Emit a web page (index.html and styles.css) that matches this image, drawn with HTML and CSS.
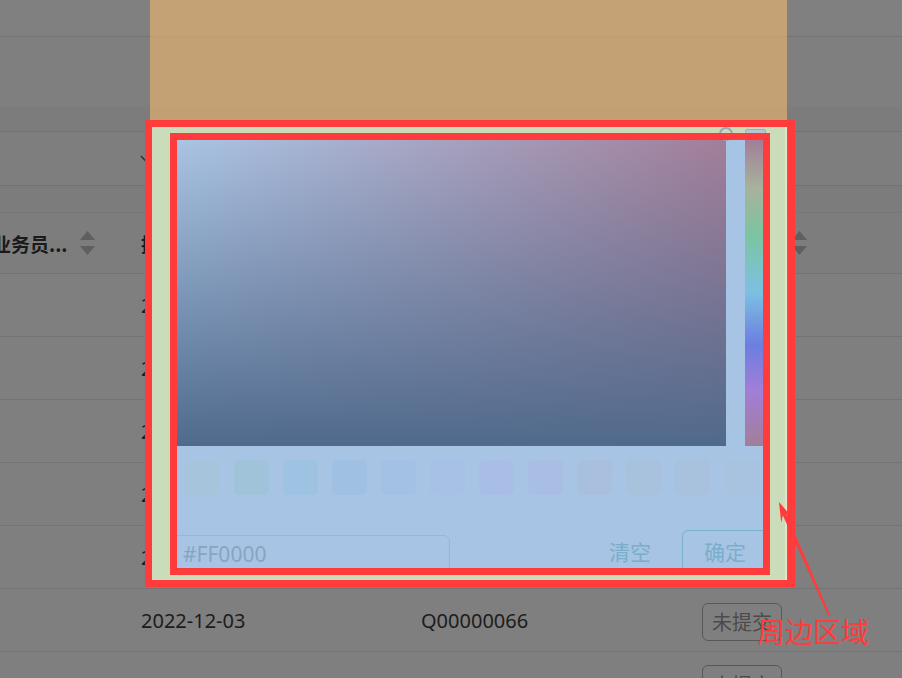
FILE: index.html
```html
<!DOCTYPE html>
<html lang="zh-CN">
<head>
<meta charset="utf-8">
<title>颜色选择器</title>
<link rel="stylesheet" href="styles.css">
</head>
<body>
<div class="page">
  <div class="band band-top"></div>
  <div class="band band-mid"></div>
  <div class="band band-sub"></div>
  <div class="filter-row">
    <svg class="chev" width="14" height="9" viewBox="0 0 14 9"><path d="M1 1 L7 7.5 L13 1" fill="none" stroke="#2e2e2e" stroke-width="1.4"/></svg>
  </div>
  <div class="band band-gap"></div>

  <div class="grid-row head">
    <div class="cell c1"><span class="ht ht-cut">业务员...</span>
      <svg class="sort" width="15" height="24" viewBox="0 0 15 24"><path d="M7.5 0 L15 9 L0 9 Z M0 15 L15 15 L7.5 24 Z" fill="#5f5f5f"/></svg>
    </div>
    <div class="cell"><span class="ht">提交日期</span></div>
    <div class="cell"><span class="ht">报价单号</span></div>
    <div class="cell c4"><span class="ht">状态</span>
      <svg class="sort sort-end" width="15" height="24" viewBox="0 0 15 24"><path d="M7.5 0 L15 9 L0 9 Z M0 15 L15 15 L7.5 24 Z" fill="#5f5f5f"/></svg>
    </div>
    <div class="cell"></div>
  </div>

  <div class="grid-row"><div class="cell"></div><div class="cell">2022-12-05</div><div class="cell">Q00000071</div><div class="cell"><span class="tag">未提交</span></div><div class="cell"></div></div>
  <div class="grid-row"><div class="cell"></div><div class="cell">2022-12-05</div><div class="cell">Q00000070</div><div class="cell"><span class="tag">未提交</span></div><div class="cell"></div></div>
  <div class="grid-row"><div class="cell"></div><div class="cell">2022-12-04</div><div class="cell">Q00000069</div><div class="cell"><span class="tag">未提交</span></div><div class="cell"></div></div>
  <div class="grid-row"><div class="cell"></div><div class="cell">2022-12-04</div><div class="cell">Q00000068</div><div class="cell"><span class="tag">未提交</span></div><div class="cell"></div></div>
  <div class="grid-row"><div class="cell"></div><div class="cell">2022-12-03</div><div class="cell">Q00000067</div><div class="cell"><span class="tag">未提交</span></div><div class="cell"></div></div>
  <div class="grid-row"><div class="cell"></div><div class="cell">2022-12-03</div><div class="cell">Q00000066</div><div class="cell"><span class="tag">未提交</span></div><div class="cell"></div></div>
  <div class="grid-row last"><div class="cell"></div><div class="cell"></div><div class="cell"></div><div class="cell cell-top"><span class="tag">未提交</span></div><div class="cell"></div></div>
</div>

<!-- inspector highlight over the color picker -->
<div class="hl-margin"></div>
<div class="hl-padding"></div>
<div class="picker">
  <div class="picker-top">
    <div class="sv-panel"></div>
    <div class="hue-bar"></div>
  </div>
  <div class="swatches">
    <span class="sw sw1"></span><span class="sw sw2"></span><span class="sw sw3"></span><span class="sw sw4"></span>
    <span class="sw sw5"></span><span class="sw sw6"></span><span class="sw sw7"></span><span class="sw sw8"></span>
    <span class="sw sw9"></span><span class="sw sw10"></span><span class="sw sw11"></span><span class="sw sw12"></span>
  </div>
  <div class="picker-foot">
    <div class="hex-input">#FF0000</div>
    <span class="btn-text">清空</span>
    <span class="btn-ok">确定</span>
  </div>
</div>
<div class="sv-cursor"></div>
<div class="hue-thumb"></div>

<!-- annotation -->
<div class="mark mark-outer"></div>
<div class="mark mark-inner"></div>
<svg class="arrow" width="902" height="678" viewBox="0 0 902 678">
  <polygon points="779,502 792.6,517.9 786.5,514 830.1,614.9 828.3,615.7 782.9,515.6 781.2,522.7" fill="#ff3b3b"/>
</svg>
<div class="note">周边区域</div>
</body>
</html>
```
FILE: styles.css
```css
* { box-sizing: border-box; }

body {
  margin: 0;
  width: 902px;
  height: 678px;
  overflow: hidden;
  position: relative;
  background: #7f7f7f;
  font-family: "Noto Sans", "Noto Sans CJK SC", sans-serif;
  color: #1c1c1c;
}

/* ---------- background table (under modal mask) ---------- */
.page {
  display: flex;
  flex-direction: column;
  height: 678px;
  overflow: hidden;
}

.band { flex: none; }
.band-top { height: 37px; background: #808080; border-bottom: 1px solid #747474; }
.band-mid { height: 70px; background: #7f7f7f; }
.band-sub { height: 25px; background: #7c7c7c; border-bottom: 1px solid #727272; }
.filter-row {
  flex: none;
  height: 54px;
  background: #7e7e7e;
  border-bottom: 1px solid #727272;
  display: flex;
  align-items: center;
  padding-left: 140px;
}
.chev { display: block; margin-top: 2px; }
.band-gap { height: 27px; background: #7c7c7c; border-bottom: 1px solid #777777; }

.grid-row {
  flex: none;
  display: grid;
  grid-template-columns: 141px 280px 281px 105px 1fr;
  height: 63px;
  border-bottom: 1px solid #747474;
  background: #7f7f7f;
  font-size: 20px;
}
.grid-row.head { height: 61px; background: #7d7d7d; }
.grid-row.last { height: 27px; border-bottom: 0; }

.cell {
  display: flex;
  align-items: center;
  overflow: hidden;
  white-space: nowrap;
}
.cell-top { align-items: flex-start; padding-top: 13px; }
.ht {
  font-weight: 700;
  font-size: 19px;
  color: #1a1a1a;
  font-family: "Noto Sans CJK SC", sans-serif;
}
.ht-cut { margin-left: -8px; }
.sort { display: block; margin-left: 12px; flex: none; }
.sort-end { margin-left: auto; }

.tag {
  display: inline-flex;
  align-items: center;
  height: 38px;
  padding: 0 9px;
  border: 1px solid #585858;
  border-radius: 6px;
  color: #4b4b4b;
  font-size: 20px;
  font-family: "Noto Sans CJK SC", sans-serif;
  margin-top: 3px;
}
.cell-top .tag { margin-top: 0; }

/* ---------- inspector highlight ---------- */
.hl-margin {
  position: absolute;
  left: 150px;
  top: 0;
  width: 637px;
  height: 126px;
  background: rgba(232, 178, 113, 0.66);
}
.hl-padding {
  position: absolute;
  left: 150px;
  top: 120px;
  width: 637px;
  height: 467px;
  background: #cbdcbb;
  border-right: 2px solid #e3e3c6;
}

.picker {
  position: absolute;
  left: 170px;
  top: 133px;
  width: 600px;
  height: 442px;
  padding: 7px;
  background: #a8c4e4;
  display: flex;
  flex-direction: column;
}
.picker-top {
  display: flex;
  height: 306px;
  flex: none;
}
.sv-panel {
  width: 549px;
  height: 306px;
  background:
    linear-gradient(to bottom, rgba(80, 106, 140, 0) 0%, #506a8c 100%),
    linear-gradient(to right, #a9c4e4 0%, #a27e99 100%);
}
.hue-bar {
  width: 21px;
  margin-left: 19px;
  margin-right: -3px;
  height: 306px;
  background: linear-gradient(to bottom,
    #a37e99 0%, #a7b39c 16%, #7cc4a0 31%, #7cc3c8 42%, #7cc0e2 50%,
    #7090e0 62%, #6c7ee0 67%, #a27ed8 82%, #a37e99 100%);
}

.swatches {
  display: flex;
  gap: 14px;
  margin-top: 14px;
  padding-left: 8px;
  flex: none;
}
.sw { width: 35px; height: 35px; border-radius: 5px; flex: none; }
.sw1 { background: #a6c5dc; }
.sw2 { background: #a0c3d9; }
.sw3 { background: #9dc2e2; }
.sw4 { background: #a0c0e3; }
.sw5 { background: #a3c0e5; }
.sw6 { background: #a7c1e6; }
.sw7 { background: #a8bee6; }
.sw8 { background: #a9bee3; }
.sw9 { background: #a8bfdd; }
.sw10 { background: #a8c1dc; }
.sw11 { background: #a8c2de; }
.sw12 { background: #a7c3df; }

.picker-foot {
  display: flex;
  align-items: flex-start;
  margin-top: 35px;
  font-size: 21px;
  font-family: "Noto Sans", "Noto Sans CJK SC", sans-serif;
}
.hex-input {
  margin-top: 5px;
  margin-left: -5px;
  width: 278px;
  height: 40px;
  border: 1px solid #98b6d6;
  border-radius: 6px;
  padding-left: 10px;
  line-height: 36px;
  color: #87a4c3;
}
.btn-text {
  margin-left: auto;
  margin-right: 31px;
  line-height: 42px;
  color: #79aecb;
  font-family: "Noto Sans CJK SC", sans-serif;
}
.btn-ok {
  width: 86px;
  height: 42px;
  margin-right: -5px;
  border: 1px solid #77b2cf;
  border-radius: 6px;
  display: flex;
  justify-content: center;
  align-items: center;
  color: #7aaecb;
  font-family: "Noto Sans CJK SC", sans-serif;
}

.sv-cursor {
  position: absolute;
  left: 719px;
  top: 127px;
  width: 14px;
  height: 14px;
  border-radius: 50%;
  border: 2px solid #93a8b4;
}
.hue-thumb {
  position: absolute;
  left: 745px;
  top: 129px;
  width: 21px;
  height: 10px;
  border-radius: 2px;
  background: #b3c6d8;
  border: 1px solid #98b0c8;
}

/* ---------- annotation ---------- */
.mark {
  position: absolute;
  border: 7px solid #ff3b3b;
}
.mark-outer { left: 145px; top: 120px; width: 650px; height: 467px; }
.mark-inner { left: 170px; top: 133px; width: 600px; height: 442px; }

.arrow {
  position: absolute;
  left: 0;
  top: 0;
}
.note {
  position: absolute;
  left: 757px;
  top: 615px;
  font-size: 28px;
  line-height: 1.2;
  color: #ff3b3b;
  font-family: "Noto Sans CJK SC", sans-serif;
  white-space: nowrap;
}
```
